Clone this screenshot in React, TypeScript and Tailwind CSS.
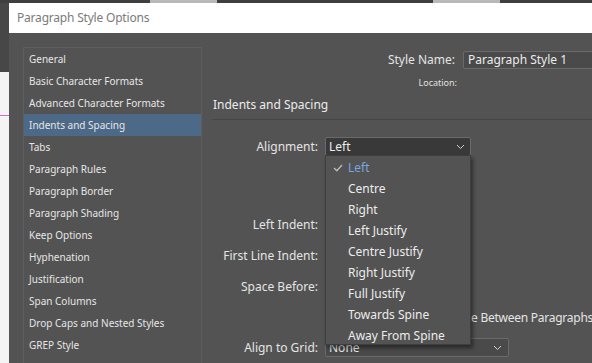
import React from "react";

const sidebar = [
  "General",
  "Basic Character Formats",
  "Advanced Character Formats",
  "Indents and Spacing",
  "Tabs",
  "Paragraph Rules",
  "Paragraph Border",
  "Paragraph Shading",
  "Keep Options",
  "Hyphenation",
  "Justification",
  "Span Columns",
  "Drop Caps and Nested Styles",
  "GREP Style",
];

const options = [
  "Left",
  "Centre",
  "Right",
  "Left Justify",
  "Centre Justify",
  "Right Justify",
  "Full Justify",
  "Towards Spine",
  "Away From Spine",
];

function Chevron() {
  return (
    <svg width="9" height="6" viewBox="0 0 9 6" className="shrink-0">
      <path d="M1 1 L4.5 4.5 L8 1" fill="none" stroke="#d0d0d0" strokeWidth="1" />
    </svg>
  );
}

export default function App() {
  const font = { fontFamily: '"Noto Sans", "Open Sans", sans-serif' };
  return (
    <div className="w-[592px] h-[363px] overflow-hidden flex flex-col bg-[#454545]" style={font}>
      <div className="h-[3px] flex shrink-0 bg-[#3f3f3f]">
        <div className="w-[150px]" />
        <div className="w-[67px] bg-[#b8b8b8]" />
        <div className="w-[216px]" />
        <div className="w-[67px] bg-[#b8b8b8]" />
      </div>
      <div className="flex flex-1 min-h-0">
        <div className="w-[9px] flex flex-col shrink-0">
          <div className="h-[69px] bg-[#474747]" />
          <div className="flex-1 bg-[#f4f4f4] pt-[43px]">
            <div className="h-px bg-[#d66ad6]" />
          </div>
        </div>
        <div className="flex-1 flex flex-col min-w-0">
          <div className="h-[30px] bg-white flex items-center pl-[8px] shrink-0">
            <span className="text-[12px] text-[#7a7a7a] tracking-[-0.2px]">Paragraph Style Options</span>
          </div>
          <div className="flex-1 bg-[#535353] flex relative">
            <div className="ml-[14px] mt-[14px] w-[179px] border border-[#5e5e5e] border-b-0 flex flex-col shrink-0">
              {sidebar.map((s) => (
                <div
                  key={s}
                  className={`h-[22px] flex items-center pl-[5px] text-[10px] text-[#e6e6e6] shrink-0 ${
                    s === "Indents and Spacing" ? "bg-[#4c6987]" : ""
                  }`}
                >
                  {s}
                </div>
              ))}
            </div>
            <div className="flex-1 relative flex flex-col text-[12px] text-[#e4e4e4]">
              <div className="flex items-center mt-[18px] h-[18px]">
                <div className="w-[253px] text-right">Style Name:</div>
                <div className="ml-[8px] w-[140px] h-[18px] bg-[#4a4a4a] border border-[#6a6a6a] rounded-[2px] flex items-center pl-[4px] text-[12px] text-[#ececec] whitespace-nowrap">
                  Paragraph Style 1
                </div>
              </div>
              <div className="flex mt-[6px] h-[16px] items-center">
                <div className="w-[255px] text-right text-[9px] text-[#e0e0e0]">Location:</div>
              </div>
              <div className="mt-[5px] ml-[11px] h-[18px] flex items-center text-[12px] text-[#ececec]">
                Indents and Spacing
              </div>
              <div className="mt-[5px] ml-[10px] h-px bg-[#464646]" />
              <div className="flex items-center mt-[17px] h-[19px]">
                <div className="w-[116px] text-right">Alignment:</div>
                <div className="ml-[7px] w-[146px] h-[19px] bg-[#393939] border border-[#6a6a6a] rounded-[2px] flex items-center justify-between pl-[3px] pr-[5px]">
                  <span className="text-[#eeeeee]">Left</span>
                  <Chevron />
                </div>
              </div>
              <div className="flex items-center mt-[59px] h-[19px]">
                <div className="w-[116px] text-right">Left Indent:</div>
              </div>
              <div className="flex items-center mt-[12px] h-[19px]">
                <div className="w-[116px] text-right">First Line Indent:</div>
              </div>
              <div className="flex items-center mt-[12px] h-[19px]">
                <div className="w-[116px] text-right">Space Before:</div>
              </div>
              <div className="flex items-center mt-[12px] h-[19px]">
                <div className="ml-[269px] whitespace-nowrap tracking-[-0.25px]">e Between Paragraphs</div>
              </div>
              <div className="flex items-center mt-[11px] h-[19px]">
                <div className="w-[116px] text-right">Align to Grid:</div>
                <div className="ml-[7px] w-[184px] h-[19px] bg-[#4a4a4a] border border-[#6a6a6a] rounded-[2px] flex items-center justify-between pl-[3px] pr-[6px]">
                  <span className="text-[#eeeeee]">None</span>
                  <Chevron />
                </div>
              </div>

              <div className="absolute left-[123px] top-[122px] w-[146px] h-[190px] bg-[#535353] border border-[#3e3e3e] shadow-[2px_3px_4px_rgba(0,0,0,0.45)] flex flex-col pt-[1px]">
                {options.map((o, i) => (
                  <div key={o} className="h-[21px] flex items-center shrink-0 text-[12px]">
                    <div className="w-[22px] flex justify-center pl-[2px]">
                      {i === 0 && (
                        <svg width="10" height="8" viewBox="0 0 10 8">
                          <path d="M1 4 L3.8 6.8 L9 1" fill="none" stroke="#bdbdbd" strokeWidth="1.3" />
                        </svg>
                      )}
                    </div>
                    <span className={i === 0 ? "text-[#76a6e0]" : "text-[#ececec]"}>{o}</span>
                  </div>
                ))}
              </div>
            </div>
          </div>
        </div>
      </div>
    </div>
  );
}
